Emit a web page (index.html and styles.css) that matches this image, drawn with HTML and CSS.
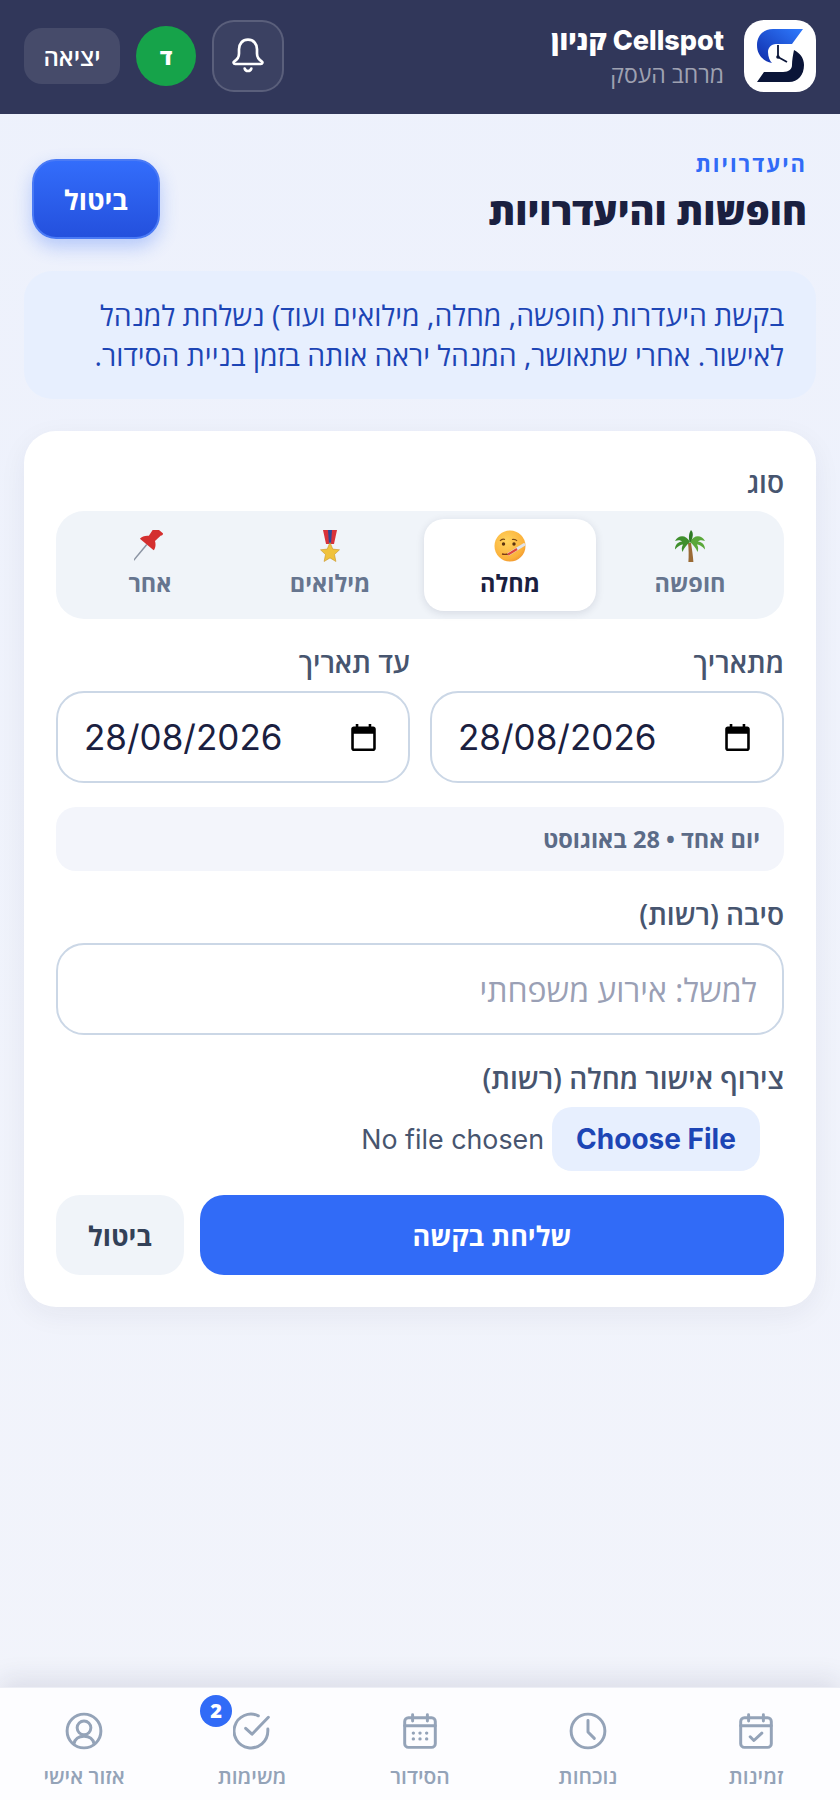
FILE: index.html
```html
<!DOCTYPE html>
<html lang="he" dir="rtl">
<head>
    <meta charset="UTF-8">
    <meta name="viewport" content="width=device-width, initial-scale=1.0">
    <title>חופשות והיעדרויות</title>
    <link rel="stylesheet" href="styles.css">
</head>
<body>
    <header class="topbar">
        <div class="brand">
            <svg class="brand-logo" viewBox="0 0 72 72">
                <defs>
                    <linearGradient id="logoBlue" x1="0" y1="1" x2="1" y2="0">
                        <stop offset="0" stop-color="#0f2ba8"/>
                        <stop offset="1" stop-color="#2f7bff"/>
                    </linearGradient>
                </defs>
                <rect width="72" height="72" rx="20" fill="#fff"/>
                <path d="M29 9H59L48 24H32C27 24 24 28 24 32C24 37 26 41 28 43C19 41 13 35 13 25C13 15 20 9 29 9Z" fill="url(#logoBlue)"/>
                <path d="M50 30C56 33 60 38 60 45C60 55 54 62 45 62H13L20 52H39C45 52 48 49 48 45C48 40 49 35 50 30Z" fill="#0a1538"/>
                <path d="M34 25V37L43 42" fill="none" stroke="#0a1538" stroke-width="1.800"/>
                <circle cx="34" cy="37" r="1.800" fill="#0a1538"/>
            </svg>
            <div class="brand-text">
                <div class="brand-name">Cellspot קניון</div>
                <div class="brand-sub">מרחב העסק</div>
            </div>
        </div>
        <div class="top-actions">
            <button class="bell-btn">
                <svg viewBox="0 0 24 24" class="bell-icon"><path d="M12 2.200C8.600 2.200 6.600 4.800 6.600 8V10.500C6.600 12.500 5.800 14 3.800 15.200C3 15.700 3.300 16.800 4.300 16.800H19.700C20.700 16.800 21 15.700 20.200 15.200C18.200 14 17.400 12.500 17.400 10.500V8C17.400 4.800 15.400 2.200 12 2.200Z"/><path d="M10 19.500C10.600 21.500 13.400 21.500 14 19.500"/></svg>
            </button>
            <div class="avatar">ד</div>
            <button class="logout-btn">יציאה</button>
        </div>
    </header>

    <main class="page">
        <div class="page-head">
            <div>
                <div class="eyebrow">היעדרויות</div>
                <h1>חופשות והיעדרויות</h1>
            </div>
            <button class="head-cancel">ביטול</button>
        </div>

        <div class="info-box">בקשת היעדרות (חופשה, מחלה, מילואים ועוד) נשלחת למנהל לאישור. אחרי שתאושר, המנהל יראה אותה בזמן בניית הסידור.</div>

        <form class="card">
            <label class="field-label">סוג</label>
            <div class="segments">
                <div class="segment">
                    <svg class="emoji" viewBox="0 0 32 32">
                        <path d="M14 13c.8 6 .8 13 .4 19h5c-.4-6-1.400-13-2.400-19Z" fill="#9a6a35"/>
                        <path d="M16 12C12 4 4 5 1 11c4-1.500 6-.5 7 .5-4 .5-7 3-7 8 3-3.500 6-5 8-5-1.500 2.500-1.500 5-.5 7.500 1.500-4 4.500-7.500 7.500-10Z" fill="#3f8f2d"/>
                        <path d="M16 12c4-8 12-7 15-1-4-1.500-6-.5-7 .5 4 .5 7 3 7 8-3-3.500-6-5-8-5 1.500 2.500 1.500 5 .5 7.500-1.500-4-4.500-7.500-7.500-10Z" fill="#5aa83a"/>
                        <path d="M16 13C14 8 15 3 17 0c3 3 2 8-1 13Z" fill="#2f7a24"/>
                    </svg>
                    <span>חופשה</span>
                </div>
                <div class="segment is-active">
                    <svg class="emoji" viewBox="0 0 32 32">
                        <defs>
                            <radialGradient id="faceFill" cx=".4" cy=".35" r=".75">
                                <stop offset="0" stop-color="#ffd45e"/>
                                <stop offset=".75" stop-color="#fbb03a"/>
                                <stop offset="1" stop-color="#ee8f2c"/>
                            </radialGradient>
                        </defs>
                        <circle cx="16" cy="16" r="15.500" fill="url(#faceFill)"/>
                        <path d="M6 11c1.500-2 3.500-2 5-1.500M18 9.500c2-.5 4 0 5 1.500" fill="none" stroke="#7a4a16" stroke-width="1.200"/>
                        <circle cx="9.500" cy="14" r="1.700" fill="#5b3410"/>
                        <circle cx="20" cy="14" r="1.700" fill="#5b3410"/>
                        <path d="M8 24c2 .5 4 .5 6 0" fill="none" stroke="#7a3a16" stroke-width="1.400"/>
                        <path d="M14 24.500L31 14" stroke="#dfe3ea" stroke-width="3"/>
                        <path d="M14 24.500L23 19" stroke="#e0473c" stroke-width="2.200"/>
                    </svg>
                    <span>מחלה</span>
                </div>
                <div class="segment">
                    <svg class="emoji" viewBox="0 0 32 32">
                        <path d="M9 0h14l-3 14h-8Z" fill="#d8323a"/>
                        <path d="M14 0h4l-1 14h-2Z" fill="#2d4a9a"/>
                        <path d="M16 12.500l2.800 6.600 6.700.7-5 4.700 1.400 7-5.900-3.600-5.900 3.600 1.400-7-5-4.700 6.700-.7Z" fill="#f0c23c" stroke="#c9952a" stroke-width=".6"/>
                    </svg>
                    <span>מילואים</span>
                </div>
                <div class="segment">
                    <svg class="emoji" viewBox="0 0 32 32">
                        <g transform="translate(25 0) rotate(40)">
                            <path d="M0 19V40" stroke="#8b94a3" stroke-width="1.500"/>
                            <path d="M-5 0H5C6 0 6 3 5 3L4 11C7 13 9 16 9 19H-9C-9 16 -7 13 -4 11L-5 3C-6 3 -6 0 -5 0Z" fill="#d42f2f"/>
                        </g>
                    </svg>
                    <span>אחר</span>
                </div>
            </div>

            <div class="date-row">
                <div class="date-col">
                    <label class="field-label">מתאריך</label>
                    <div class="date-input">
                        <span>28/08/2026</span>
                        <svg viewBox="0 0 24 24"><path d="M19.500 3.500H18V1.500h-2v2H8v-2H6v2H4.500c-1.100 0-2 .9-2 2v15c0 1.100.9 2 2 2h15c1.100 0 2-.9 2-2v-15c0-1.100-.9-2-2-2Zm0 17h-15V9h15Z"/></svg>
                    </div>
                </div>
                <div class="date-col">
                    <label class="field-label">עד תאריך</label>
                    <div class="date-input">
                        <span>28/08/2026</span>
                        <svg viewBox="0 0 24 24"><path d="M19.500 3.500H18V1.500h-2v2H8v-2H6v2H4.500c-1.100 0-2 .9-2 2v15c0 1.100.9 2 2 2h15c1.100 0 2-.9 2-2v-15c0-1.100-.9-2-2-2Zm0 17h-15V9h15Z"/></svg>
                    </div>
                </div>
            </div>

            <div class="summary">יום אחד • 28 באוגוסט</div>

            <label class="field-label">סיבה (רשות)</label>
            <input class="text-input" type="text" placeholder="למשל: אירוע משפחתי">

            <label class="field-label file-label">צירוף אישור מחלה (רשות)</label>
            <div class="file-row">
                <span class="file-btn">Choose File</span>
                <span class="file-name">No file chosen</span>
            </div>

            <div class="form-actions">
                <button type="button" class="submit-btn">שליחת בקשה</button>
                <button type="button" class="cancel-btn">ביטול</button>
            </div>
        </form>
    </main>

    <nav class="bottom-nav">
        <a class="nav-item">
            <svg viewBox="0 0 36 36"><rect x="3.500" y="5.500" width="29" height="28" rx="3.500"/><path d="M3.500 13h29M11 2.500v6M25 2.500v6M12.500 23.500l3.500 3.500 7.500-7"/></svg>
            <span>זמינות</span>
        </a>
        <a class="nav-item">
            <svg viewBox="0 0 36 36"><circle cx="18" cy="18" r="16"/><path d="M18 8v11l6 6"/></svg>
            <span>נוכחות</span>
        </a>
        <a class="nav-item">
            <svg viewBox="0 0 36 36"><rect x="3.500" y="5.500" width="29" height="28" rx="3.500"/><path d="M3.500 13h29M11 2.500v6M25 2.500v6"/><path class="dots" d="M11.700 20h.01M18 20h.01M24.300 20h.01M11.700 25.500h.01M18 25.500h.01M24.300 25.500h.01"/></svg>
            <span>הסידור</span>
        </a>
        <a class="nav-item">
            <span class="nav-icon-wrap">
                <svg viewBox="0 0 36 36"><path d="M33 16v2a16 16 0 1 1-9-14.400"/><path d="M12 15.500l6 5.500L33.500 5"/></svg>
                <span class="badge">2</span>
            </span>
            <span>משימות</span>
        </a>
        <a class="nav-item">
            <svg viewBox="0 0 36 36"><circle cx="18" cy="18" r="16"/><circle cx="18" cy="15" r="6.500"/><path d="M8.500 30c1-4.500 4-7 9.500-7s8.500 2.500 9.500 7"/></svg>
            <span>אזור אישי</span>
        </a>
    </nav>
</body>
</html>
```
FILE: styles.css
```css
* {
    box-sizing: border-box;
}
html, body {
    margin: 0;
    height: 100%;
}
body {
    font-family: "Open Sans", "Liberation Sans", sans-serif;
    background: linear-gradient(180deg, #edf1fc 0%, #f2f4fb 100%);
    color: #1a2040;
    display: flex;
    flex-direction: column;
    min-height: 1800px;
}
button {
    font-family: inherit;
    border: none;
    cursor: pointer;
}

/* top bar */
.topbar {
    height: 114px;
    padding: 20px 24px 22px;
    background: #31375a;
    display: flex;
    justify-content: space-between;
    align-items: center;
}
.brand {
    display: flex;
    align-items: center;
    gap: 20px;
}
.brand-logo {
    width: 72px;
    height: 72px;
    display: block;
}
.brand-name {
    font-family: Inter, "Open Sans", sans-serif;
    font-size: 27px;
    font-weight: 800;
    line-height: 36px;
    color: #fff;
}
.brand-sub {
    font-size: 23px;
    line-height: 30px;
    color: rgba(255, 255, 255, 0.55);
}
.top-actions {
    display: flex;
    align-items: center;
    gap: 16px;
}
.bell-btn {
    width: 72px;
    height: 72px;
    border-radius: 22px;
    background: rgba(255, 255, 255, 0.05);
    border: 2px solid rgba(255, 255, 255, 0.16);
    display: flex;
    align-items: center;
    justify-content: center;
    padding: 0;
}
.bell-icon {
    width: 40px;
    height: 40px;
    fill: none;
    stroke: #fff;
    stroke-width: 1.6;
    stroke-linecap: round;
}
.avatar {
    width: 60px;
    height: 60px;
    border-radius: 50%;
    background: #16a34a;
    color: #fff;
    font-size: 22px;
    font-weight: 800;
    display: flex;
    align-items: center;
    justify-content: center;
}
.logout-btn {
    width: 96px;
    height: 56px;
    border-radius: 18px;
    background: rgba(255, 255, 255, 0.1);
    color: #fff;
    font-size: 24px;
    font-weight: 600;
    padding: 0;
}

/* page */
.page {
    flex: 1;
    padding: 24px 24px 0;
}
.page-head {
    display: flex;
    justify-content: space-between;
    align-items: flex-start;
    padding: 0 9px 0 8px;
    margin-bottom: 33px;
    height: 100px;
}
.eyebrow {
    font-size: 22px;
    font-weight: 700;
    line-height: 30px;
    letter-spacing: 2px;
    color: #316bf7;
    margin-top: 10px;
}
h1 {
    margin: 5px 0 0;
    font-size: 38px;
    font-weight: 800;
    line-height: 54px;
    color: #1a2040;
}
.head-cancel {
    width: 128px;
    height: 80px;
    margin-top: 21px;
    border-radius: 24px;
    border: 2px solid #4a7af5;
    background: linear-gradient(180deg, #336dfb, #2450dd);
    box-shadow: 0 8px 18px rgba(49, 107, 247, 0.3);
    color: #fff;
    font-size: 27px;
    font-weight: 700;
}
.info-box {
    background: #e7effe;
    border-radius: 28px;
    padding: 24px 32px;
    height: 128px;
    font-size: 28.4px;
    line-height: 40px;
    color: #1d45b5;
    margin-bottom: 32px;
}
.card {
    background: #fff;
    border-radius: 32px;
    padding: 32px;
    box-shadow: 0 8px 28px rgba(26, 32, 64, 0.06);
}
.field-label {
    display: block;
    font-size: 28px;
    font-weight: 600;
    line-height: 38px;
    color: #47556f;
    margin-bottom: 10px;
}

/* type picker */
.segments {
    display: grid;
    grid-template-columns: repeat(4, 1fr);
    gap: 8px;
    padding: 8px;
    height: 108px;
    border-radius: 28px;
    background: #f0f4f9;
    margin-bottom: 24px;
}
.segment {
    display: flex;
    flex-direction: column;
    align-items: center;
    padding-top: 11px;
    gap: 5px;
    border-radius: 20px;
    font-size: 23.5px;
    font-weight: 700;
    line-height: 32px;
    color: #66758f;
}
.segment.is-active {
    background: #fff;
    color: #1a2040;
    box-shadow: 0 2px 8px rgba(26, 32, 64, 0.12);
}
.emoji {
    width: 32px;
    height: 32px;
    display: block;
}

/* dates */
.date-row {
    display: grid;
    grid-template-columns: 1fr 1fr;
    gap: 20px;
    margin-bottom: 24px;
}
.date-input {
    height: 92px;
    border: 2px solid #cbd7e6;
    border-radius: 28px;
    padding: 0 29px 0 26px;
    display: flex;
    justify-content: space-between;
    align-items: center;
    direction: ltr;
    font-family: Inter, sans-serif;
    font-size: 35px;
    color: #1a2040;
}
.date-input svg {
    width: 31px;
    height: 31px;
    fill: #000;
}
.summary {
    height: 64px;
    background: #f3f5fb;
    border-radius: 20px;
    padding: 0 24px;
    display: flex;
    align-items: center;
    font-size: 23.5px;
    font-weight: 700;
    color: #5b6b87;
    margin-bottom: 24px;
}
.text-input {
    display: block;
    width: 100%;
    height: 92px;
    border: 2px solid #cbd7e6;
    border-radius: 28px;
    padding: 0 25px;
    font-family: inherit;
    font-size: 32px;
    background: #fff;
}
.text-input::placeholder {
    color: #9aa0b5;
    opacity: 1;
}
.file-label {
    margin-top: 24px;
}
.file-row {
    display: flex;
    align-items: center;
    gap: 8px;
    padding: 0 24px;
    margin-bottom: 24px;
}
.file-btn {
    width: 208px;
    height: 64px;
    border-radius: 20px;
    background: #e7effe;
    color: #1d45b5;
    font-family: Inter, sans-serif;
    font-size: 28px;
    font-weight: 700;
    display: flex;
    align-items: center;
    justify-content: center;
}
.file-name {
    font-family: Inter, sans-serif;
    font-size: 26.8px;
    color: #47556f;
}
.form-actions {
    display: flex;
    gap: 16px;
}
.submit-btn {
    flex: 1;
    height: 80px;
    border-radius: 24px;
    background: #316bf7;
    color: #fff;
    font-size: 27px;
    font-weight: 700;
}
.cancel-btn {
    width: 128px;
    height: 80px;
    border-radius: 24px;
    background: #f0f4f9;
    color: #334158;
    font-size: 27px;
    font-weight: 700;
}

/* bottom nav */
.bottom-nav {
    height: 113px;
    background: #fdfdff;
    border-top: 1px solid #eceef5;
    box-shadow: 0 -8px 24px rgba(26, 32, 64, 0.1);
    display: grid;
    grid-template-columns: repeat(5, 1fr);
}
.nav-item {
    display: flex;
    flex-direction: column;
    align-items: center;
    padding-top: 24px;
    gap: 13px;
    font-size: 21px;
    font-weight: 600;
    line-height: 26px;
    color: #94a3b8;
}
.nav-item svg {
    width: 38px;
    height: 38px;
    display: block;
    fill: none;
    stroke: #94a3b8;
    stroke-width: 2.8;
    stroke-linecap: round;
    stroke-linejoin: round;
}
.nav-item .dots {
    stroke-width: 3.2;
}
.nav-icon-wrap {
    position: relative;
    display: block;
}
.badge {
    position: absolute;
    top: -17px;
    left: -33px;
    width: 32px;
    height: 32px;
    border-radius: 50%;
    background: #316bf7;
    color: #fff;
    font-size: 20px;
    font-weight: 800;
    display: flex;
    align-items: center;
    justify-content: center;
}
```
